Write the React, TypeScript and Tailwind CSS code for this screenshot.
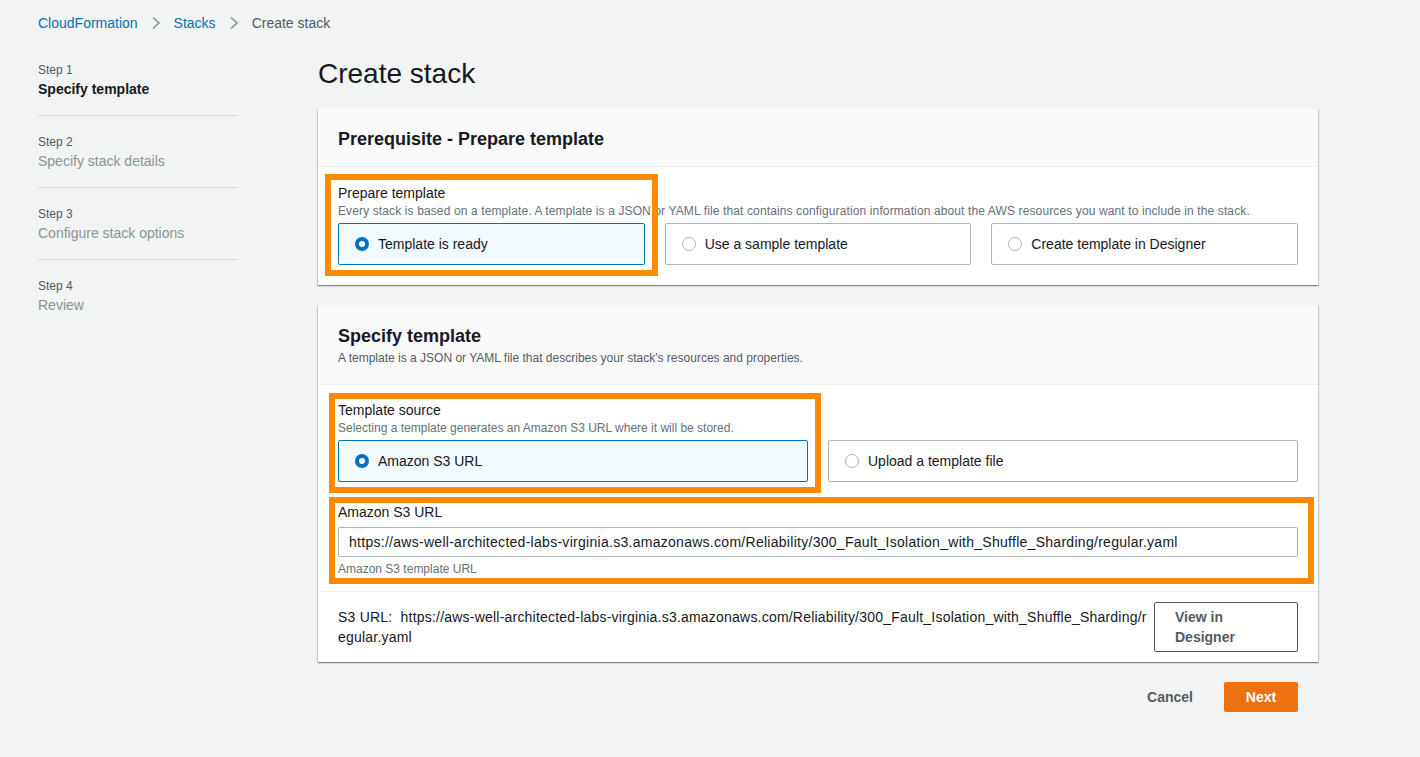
import { ReactNode } from "react";

const Chevron = () => (
  <svg width="10" height="14" viewBox="0 0 10 14" className="mx-[13px] shrink-0">
    <polyline points="2,1.5 8,7 2,12.5" fill="none" stroke="#879596" strokeWidth="1.6" />
  </svg>
);

const Breadcrumbs = () => (
  <div className="flex items-center h-[20px] text-[14px] leading-[20px]">
    <span className="text-[#0073bb]">CloudFormation</span>
    <Chevron />
    <span className="text-[#0073bb]">Stacks</span>
    <Chevron />
    <span className="text-[#545b64]">Create stack</span>
  </div>
);

interface IStep {
  step: string;
  title: string;
  active?: boolean;
  last?: boolean;
}

const Step = ({ step, title, active, last }: IStep) => (
  <div className={`${active ? "pt-[6px]" : "pt-[18px]"} ${last ? "" : "pb-[16px] border-b border-[#d5dbdb]"}`}>
    <div className="text-[12px] leading-[16px] text-[#545b64]">{step}</div>
    <div
      className={`text-[14px] leading-[20px] mt-[1px] ${
        active ? "font-bold text-[#16191f]" : "text-[#879596]"
      }`}
    >
      {title}
    </div>
  </div>
);

const Radio = ({ checked }: { checked?: boolean }) =>
  checked ? (
    <span className="w-[14px] h-[14px] rounded-full border-[4px] border-[#0073bb] bg-white shrink-0" />
  ) : (
    <span className="w-[14px] h-[14px] rounded-full border-[1.5px] border-[#aab7b8] bg-white shrink-0" />
  );

const Tile = ({ label, checked }: { label: string; checked?: boolean }) => (
  <div
    className={`flex items-center gap-[9px] h-[42px] px-[16px] rounded-[2px] border text-[14px] ${
      checked ? "border-[#0073bb] bg-[#f1faff]" : "border-[#aab7b8] bg-white"
    }`}
  >
    <Radio checked={checked} />
    <span>{label}</span>
  </div>
);

const Highlight = ({ className }: { className: string }) => (
  <div className={`absolute border-[6px] border-[#ff8a00] pointer-events-none z-10 ${className}`} />
);

const Card = ({ children }: { children: ReactNode }) => (
  <section className="bg-white shadow-[0_1px_1px_0_rgba(0,28,36,0.3),1px_1px_1px_0_rgba(0,28,36,0.15),-1px_1px_1px_0_rgba(0,28,36,0.15)]">
    {children}
  </section>
);

export default function App() {
  return (
    <div className="min-h-screen bg-[#f2f3f3] font-['Liberation_Sans',Arial,sans-serif] text-[#16191f] pt-[13px]">
      <div className="px-[38px]">
        <Breadcrumbs />
      </div>

      <div className="flex pl-[38px] gap-[80px] mt-[23px]">
        <nav className="w-[200px] shrink-0">
          <Step step="Step 1" title="Specify template" active />
          <Step step="Step 2" title="Specify stack details" />
          <Step step="Step 3" title="Configure stack options" />
          <Step step="Step 4" title="Review" last />
        </nav>

        <main className="w-[1000px] shrink-0">
          <h1 className="text-[28px] leading-[36px] font-normal">Create stack</h1>

          <div className="mt-[17px] flex flex-col gap-[20px]">
            <Card>
              <div className="h-[58px] flex items-center px-[20px] pt-[2px] bg-[#fafafa] border-b border-[#eaeded]">
                <h2 className="text-[18px] leading-[22px] font-bold">Prerequisite - Prepare template</h2>
              </div>
              <div className="px-[20px] pt-[15px] pb-[20px]">
                <div className="relative">
                  <Highlight className="-top-[8px] -left-[13px] w-[333px] h-[102px]" />
                  <div className="text-[14px] leading-[20px] pt-[1px]">Prepare template</div>
                  <div className="text-[12px] leading-[16px] text-[#687078] tracking-[0.01em]">
                    Every stack is based on a template. A template is a JSON or YAML file that contains configuration
                    information about the AWS resources you want to include in the stack.
                  </div>
                  <div className="grid grid-cols-3 gap-[20px] mt-[4px]">
                    <Tile label="Template is ready" checked />
                    <Tile label="Use a sample template" />
                    <Tile label="Create template in Designer" />
                  </div>
                </div>
              </div>
            </Card>

            <Card>
              <div className="px-[20px] pt-[20px] pb-[18px] bg-[#fafafa] border-b border-[#eaeded]">
                <h2 className="text-[18px] leading-[22px] font-bold">Specify template</h2>
                <p className="text-[12px] leading-[16px] text-[#545b64] mt-[3px]">
                  A template is a JSON or YAML file that describes your stack's resources and properties.
                </p>
              </div>
              <div className="px-[20px] pt-[14px] pb-[15px]">
                <div className="relative">
                  <Highlight className="-top-[6px] -left-[9px] w-[492px] h-[100px]" />
                  <div className="text-[14px] leading-[20px] pt-[1px]">Template source</div>
                  <div className="text-[12px] leading-[16px] text-[#687078]">
                    Selecting a template generates an Amazon S3 URL where it will be stored.
                  </div>
                  <div className="grid grid-cols-2 gap-[20px] mt-[4px]">
                    <Tile label="Amazon S3 URL" checked />
                    <Tile label="Upload a template file" />
                  </div>
                </div>

                <div className="relative mt-[20px]">
                  <Highlight className="-top-[5px] -left-[9px] w-[985px] h-[87px]" />
                  <div className="text-[14px] leading-[20px]">Amazon S3 URL</div>
                  <div className="mt-[5px] h-[30px] flex items-center px-[10px] border border-[#aab7b8] rounded-[2px] text-[14px] tracking-[0.02em]">
                    https://aws-well-architected-labs-virginia.s3.amazonaws.com/Reliability/300_Fault_Isolation_with_Shuffle_Sharding/regular.yaml
                  </div>
                  <div className="mt-[5px] text-[12px] leading-[14px] text-[#687078]">Amazon S3 template URL</div>
                </div>
              </div>

              <div className="flex items-start gap-[4px] px-[20px] py-[10px] border-t border-[#eaeded]">
                <div className="flex-1 min-w-0 mt-[5px] text-[14px] leading-[20px] whitespace-nowrap tracking-[0.015em]">
                  <div>
                    S3 URL:&nbsp; https://aws-well-architected-labs-virginia.s3.amazonaws.com/Reliability/300_Fault_Isolation_with_Shuffle_Sharding/r
                  </div>
                  <div>egular.yaml</div>
                </div>
                <button className="w-[144px] h-[50px] shrink-0 text-left px-[20px] border border-[#545b64] rounded-[2px] bg-white text-[14px] leading-[20px] font-bold text-[#545b64]">
                  View in
                  <br />
                  Designer
                </button>
              </div>
            </Card>
          </div>

          <div className="flex items-center justify-end pr-[20px] mt-[20px] gap-[31px]">
            <button className="text-[14px] font-bold text-[#545b64]">Cancel</button>
            <button className="w-[74px] h-[30px] rounded-[2px] bg-[#ec7211] text-white text-[14px] font-bold">
              Next
            </button>
          </div>
        </main>
      </div>
    </div>
  );
}
